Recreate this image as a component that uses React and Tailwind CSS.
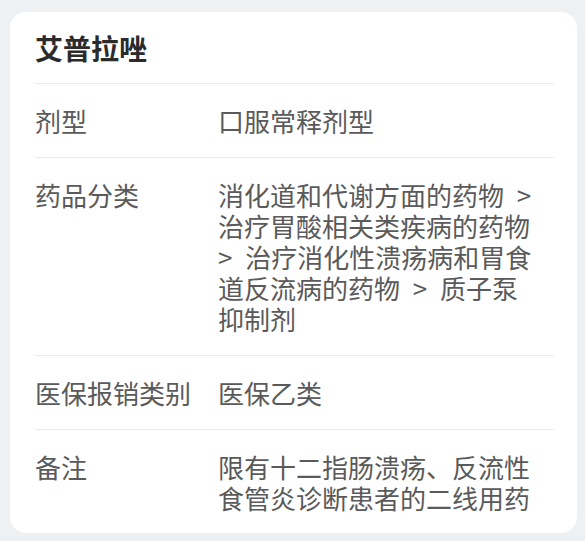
import React from 'react';

const rows = [
  { label: '剂型', value: '口服常释剂型' },
  {
    label: '药品分类',
    value: '消化道和代谢方面的药物 > 治疗胃酸相关类疾病的药物 > 治疗消化性溃疡病和胃食道反流病的药物 > 质子泵抑制剂',
  },
  { label: '医保报销类别', value: '医保乙类' },
  { label: '备注', value: '限有十二指肠溃疡、反流性食管炎诊断患者的二线用药' },
];

export default function App() {
  return (
    <div
      className="w-[585px] h-[541px] bg-[#eef1f4] pt-3 pl-[10px]"
      style={{ fontFamily: '"Noto Sans CJK SC", "Noto Sans", sans-serif' }}
    >
      <div className="w-[567px] h-[521px] bg-white rounded-2xl pl-[25px] pr-[23px] pt-[20px]">
        <h1 className="text-[28px] leading-[32px] font-bold text-[#2b2b2b] pb-[19px] border-b border-[#ececec]">
          艾普拉唑
        </h1>
        {rows.map((r, i) => (
          <div
            key={r.label}
            className={`flex py-[21px] text-[26px] leading-[31px] text-[#5a5a5a] ${
              i < rows.length - 1 ? 'border-b border-[#ececec]' : ''
            }`}
          >
            <div className="w-[183px] shrink-0">{r.label}</div>
            <div className="w-[320px] [word-spacing:7px]">{r.value}</div>
          </div>
        ))}
      </div>
    </div>
  );
}
